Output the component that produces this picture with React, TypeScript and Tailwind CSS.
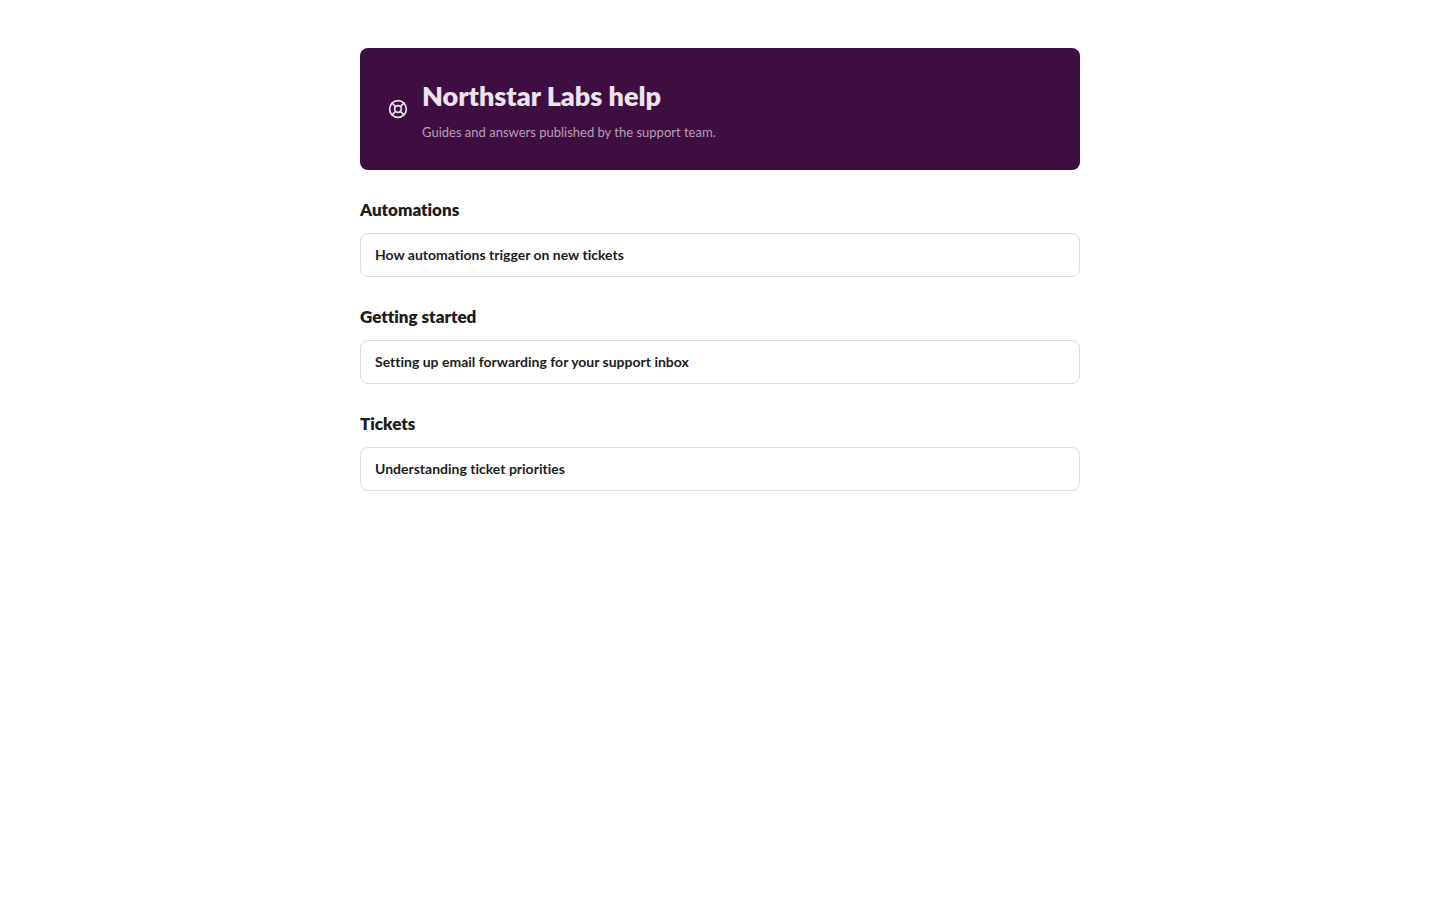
import { LifeBuoy } from "lucide-react";

const sections = [
  { title: "Automations", articles: ["How automations trigger on new tickets"] },
  { title: "Getting started", articles: ["Setting up email forwarding for your support inbox"] },
  { title: "Tickets", articles: ["Understanding ticket priorities"] },
];

export default function App() {
  return (
    <main className="mx-auto w-full max-w-[720px] py-12 font-['Lato',sans-serif] text-[#1d1c1d] [font-variant-ligatures:none]">
      <header className="flex items-center gap-3.5 rounded-lg bg-[#3f0e40] p-7 text-[#ebe3eb]">
        <LifeBuoy size={20} className="shrink-0" aria-hidden="true" />
        <div>
          <h1 className="text-[27px] leading-10 font-extrabold">Northstar Labs help</h1>
          <p className="mt-1.5 text-[13px] leading-5 text-[#b69fb6]">
            Guides and answers published by the support team.
          </p>
        </div>
      </header>
      {sections.map((section) => (
        <section key={section.title} className="mt-7">
          <h2 className="text-[17px] leading-[23px] font-extrabold">{section.title}</h2>
          <ul className="mt-3">
            {section.articles.map((article) => (
              <li key={article}>
                <a href="#" className="block rounded-lg border border-[#dddddd] px-3.5 py-2.5 text-sm leading-[22px] font-bold">
                  {article}
                </a>
              </li>
            ))}
          </ul>
        </section>
      ))}
    </main>
  );
}
